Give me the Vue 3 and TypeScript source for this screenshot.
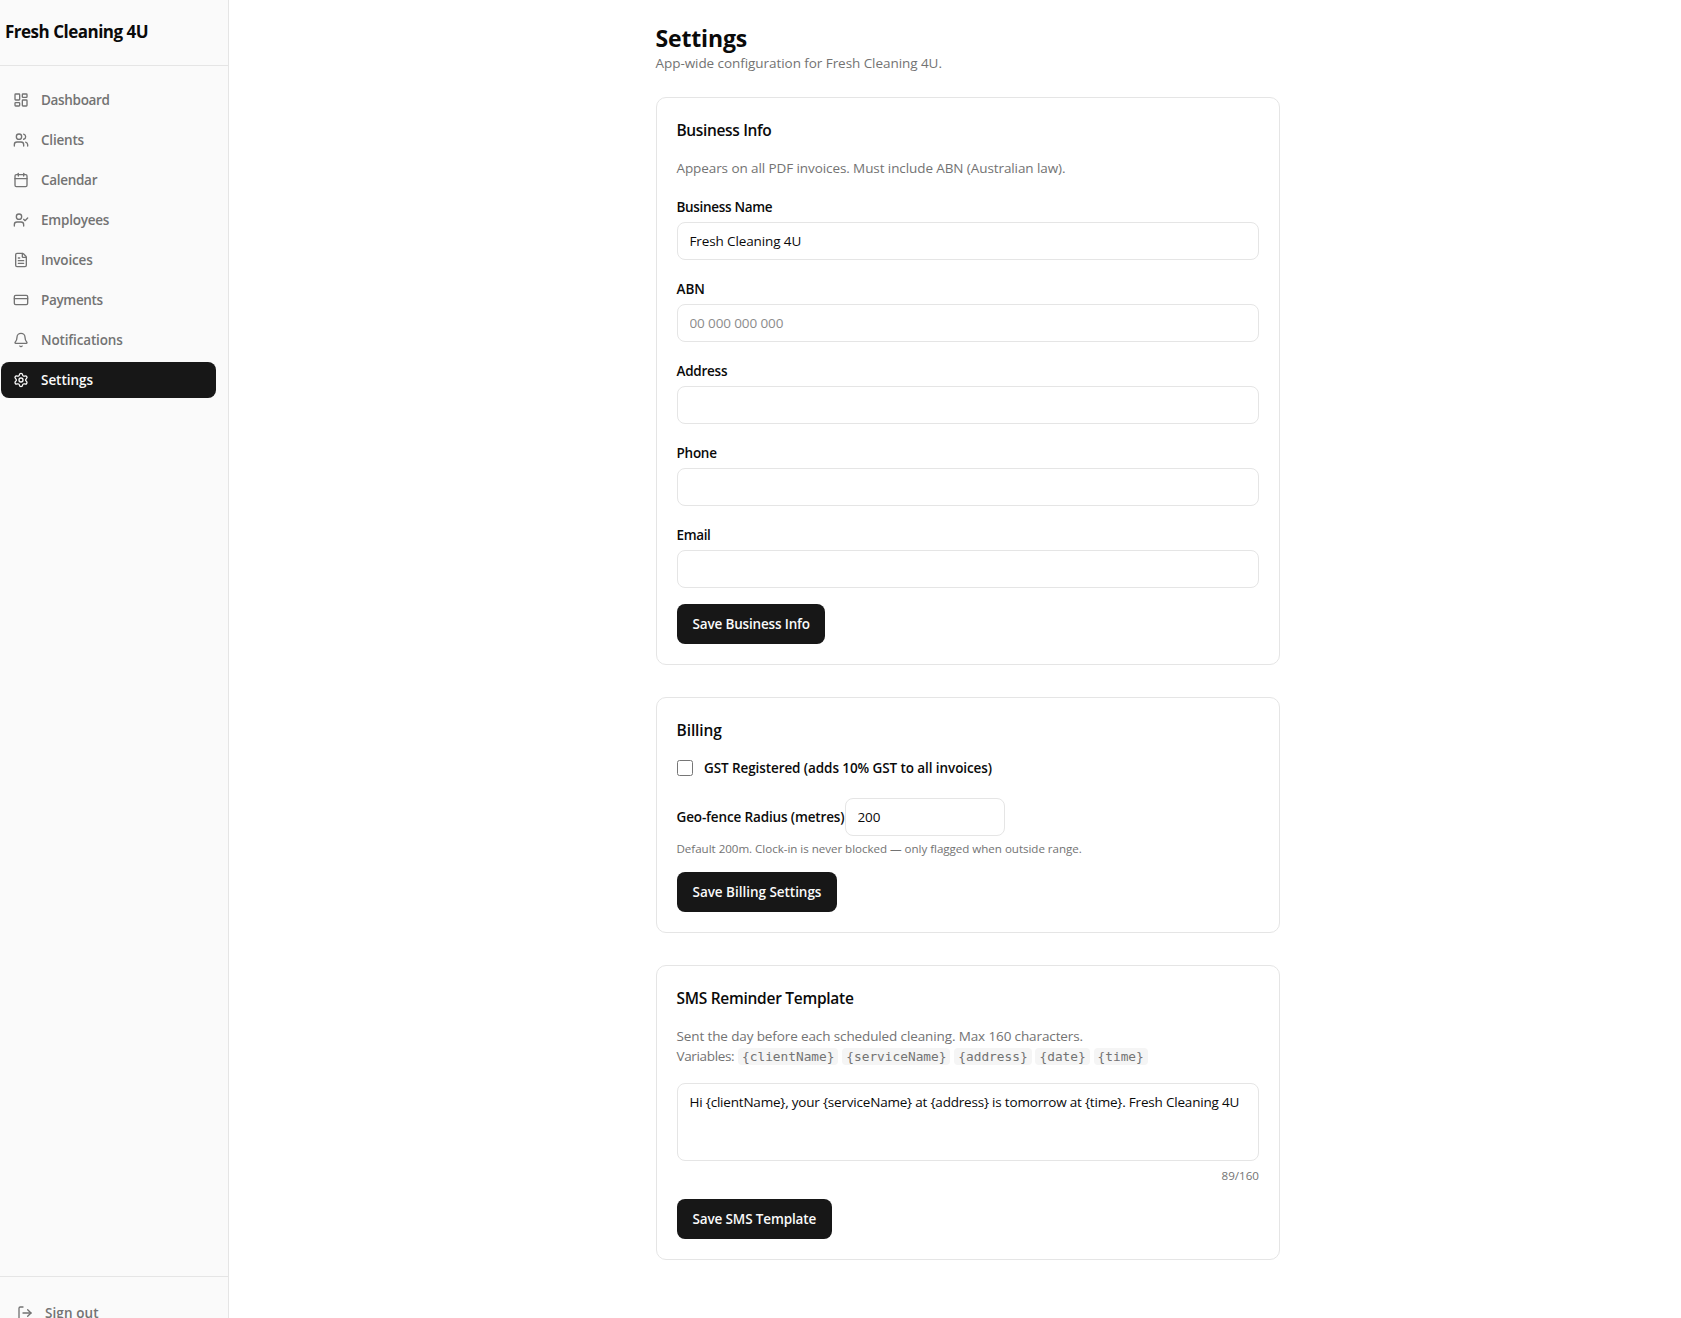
<script setup lang="ts">
import { computed, ref } from 'vue'

interface NavItem {
  label: string
  icon: string[]
  track: number
  active?: boolean
}

interface Field {
  key: string
  label: string
  value: string
  placeholder?: string
  track: number
}

const navItems: NavItem[] = [
  {
    label: 'Dashboard',
    track: -0.33,
    icon: [
      'M4 3h5a1 1 0 0 1 1 1v7a1 1 0 0 1-1 1H4a1 1 0 0 1-1-1V4a1 1 0 0 1 1-1z',
      'M15 3h5a1 1 0 0 1 1 1v3a1 1 0 0 1-1 1h-5a1 1 0 0 1-1-1V4a1 1 0 0 1 1-1z',
      'M15 12h5a1 1 0 0 1 1 1v7a1 1 0 0 1-1 1h-5a1 1 0 0 1-1-1v-7a1 1 0 0 1 1-1z',
      'M4 16h5a1 1 0 0 1 1 1v3a1 1 0 0 1-1 1H4a1 1 0 0 1-1-1v-3a1 1 0 0 1 1-1z',
    ],
  },
  {
    label: 'Clients',
    track: -0.2,
    icon: [
      'M16 21v-2a4 4 0 0 0-4-4H6a4 4 0 0 0-4 4v2',
      'M16 3.128a4 4 0 0 1 0 7.744',
      'M22 21v-2a4 4 0 0 0-3-3.87',
      'M5 7a4 4 0 1 0 8 0a4 4 0 1 0-8 0',
    ],
  },
  {
    label: 'Calendar',
    track: -0.3,
    icon: [
      'M8 2v4',
      'M16 2v4',
      'M5 4h14a2 2 0 0 1 2 2v14a2 2 0 0 1-2 2H5a2 2 0 0 1-2-2V6a2 2 0 0 1 2-2z',
      'M3 10h18',
    ],
  },
  {
    label: 'Employees',
    track: -0.22,
    icon: [
      'm16 11 2 2 4-4',
      'M16 21v-2a4 4 0 0 0-4-4H6a4 4 0 0 0-4 4v2',
      'M5 7a4 4 0 1 0 8 0a4 4 0 1 0-8 0',
    ],
  },
  {
    label: 'Invoices',
    track: -0.18,
    icon: [
      'M6 22a2 2 0 0 1-2-2V4a2 2 0 0 1 2-2h8a2.4 2.4 0 0 1 1.704.706l3.588 3.588A2.4 2.4 0 0 1 20 8v12a2 2 0 0 1-2 2z',
      'M14 2v5a1 1 0 0 0 1 1h5',
      'M10 9H8',
      'M16 13H8',
      'M16 17H8',
    ],
  },
  {
    label: 'Payments',
    track: -0.33,
    icon: ['M4 5h16a2 2 0 0 1 2 2v10a2 2 0 0 1-2 2H4a2 2 0 0 1-2-2V7a2 2 0 0 1 2-2z', 'M2 10h20'],
  },
  {
    label: 'Notifications',
    track: -0.15,
    icon: [
      'M10.268 21a2 2 0 0 0 3.464 0',
      'M3.262 15.326A1 1 0 0 0 4 17h16a1 1 0 0 0 .74-1.673C19.41 13.956 18 12.499 18 8A6 6 0 0 0 6 8c0 4.499-1.411 5.956-2.738 7.326',
    ],
  },
  {
    label: 'Settings',
    track: -0.04,
    active: true,
    icon: [
      'M9.671 4.136a2.34 2.34 0 0 1 4.659 0 2.34 2.34 0 0 0 3.319 1.915 2.34 2.34 0 0 1 2.33 4.033 2.34 2.34 0 0 0 0 3.831 2.34 2.34 0 0 1-2.33 4.033 2.34 2.34 0 0 0-3.319 1.915 2.34 2.34 0 0 1-4.659 0 2.34 2.34 0 0 0-3.32-1.915 2.34 2.34 0 0 1-2.33-4.033 2.34 2.34 0 0 0 0-3.831A2.34 2.34 0 0 1 6.35 6.051a2.34 2.34 0 0 0 3.319-1.915',
      'M9 12a3 3 0 1 0 6 0a3 3 0 1 0-6 0',
    ],
  },
]

const fields = ref<Field[]>([
  { key: 'name', label: 'Business Name', value: 'Fresh Cleaning 4U', track: -0.32 },
  { key: 'abn', label: 'ABN', value: '', placeholder: '00 000 000 000', track: -0.05 },
  { key: 'address', label: 'Address', value: '', track: -0.25 },
  { key: 'phone', label: 'Phone', value: '', track: -0.25 },
  { key: 'email', label: 'Email', value: '', track: -0.35 },
])

const gstRegistered = ref(false)
const radius = ref('200')
const variables = ['clientName', 'serviceName', 'address', 'date', 'time'].map((v) => `{${v}}`)
const template = ref('Hi {clientName}, your {serviceName} at {address} is tomorrow at {time}. Fresh Cleaning 4U')
const maxLength = 160
const counter = computed(() => `${template.value.length}/${maxLength}`)
const spacing = (track: number) => ({ letterSpacing: `${track}px` })
</script>

<template>
  <div class="app">
    <aside class="sidebar">
      <div class="brand">Fresh Cleaning 4U</div>
      <nav class="nav">
        <a v-for="item in navItems" :key="item.label" class="nav-item" :class="{ active: item.active }">
          <svg class="icon" viewBox="0 0 24 24"><path v-for="d in item.icon" :key="d" :d="d" /></svg>
          <span :style="spacing(item.track)">{{ item.label }}</span>
        </a>
      </nav>
      <div class="sidebar-footer">
        <button class="sign-out" type="button">
          <svg class="icon" viewBox="0 0 24 24">
            <path d="m16 17 5-5-5-5" />
            <path d="M21 12H9" />
            <path d="M9 21H5a2 2 0 0 1-2-2V5a2 2 0 0 1 2-2h4" />
          </svg>
          <span>Sign out</span>
        </button>
      </div>
    </aside>

    <main class="main">
      <div class="content">
        <header class="page-head">
          <h1>Settings</h1>
          <p>App-wide configuration for Fresh Cleaning 4U.</p>
        </header>

        <section class="card">
          <h2 class="h-business">Business Info</h2>
          <p class="desc">Appears on all PDF invoices. Must include ABN (Australian law).</p>
          <div v-for="f in fields" :key="f.key" class="field">
            <label :for="f.key" :style="spacing(f.track)">{{ f.label }}</label>
            <input :id="f.key" v-model="f.value" class="input" type="text" :placeholder="f.placeholder" />
          </div>
          <button class="primary save-business" type="button">Save Business Info</button>
        </section>

        <section class="card billing">
          <h2>Billing</h2>
          <div class="check-row">
            <input id="gst" v-model="gstRegistered" type="checkbox" class="checkbox" />
            <label for="gst">GST Registered (adds 10% GST to all invoices)</label>
          </div>
          <div class="radius-row">
            <label for="radius">Geo-fence Radius (metres)</label>
            <input id="radius" v-model="radius" class="input" type="text" />
          </div>
          <p class="help">Default 200m. Clock-in is never blocked — only flagged when outside range.</p>
          <button class="primary save-billing" type="button">Save Billing Settings</button>
        </section>

        <section class="card">
          <h2 class="h-sms">SMS Reminder Template</h2>
          <div class="desc sms-desc">
            <p>Sent the day before each scheduled cleaning. Max 160 characters.</p>
            <div class="variables">
              <span class="var-label">Variables:</span>
              <code v-for="v in variables" :key="v">{{ v }}</code>
            </div>
          </div>
          <textarea v-model="template" class="input textarea" spellcheck="false" :maxlength="maxLength"></textarea>
          <p class="counter">{{ counter }}</p>
          <button class="primary save-sms" type="button">Save SMS Template</button>
        </section>
      </div>
    </main>
  </div>
</template>

<style>
html,
body {
  overflow: hidden;
  background: #fff;
}
</style>

<style scoped>
.app,
.app * {
  box-sizing: border-box;
}

.app {
  display: flex;
  height: 1318px;
  overflow: hidden;
  color: #0a0a0a;
  font-family: 'Open Sans', 'Noto Sans', sans-serif;
  font-size: 13.5px;
  line-height: 20px;
}

h1,
h2,
p {
  margin: 0;
}

button,
input,
textarea {
  font-family: inherit;
  font-size: inherit;
  line-height: inherit;
}

.sidebar {
  display: flex;
  flex-direction: column;
  flex: none;
  width: 229px;
  height: 1350px;
  border-right: 1px solid #e5e5e5;
  background: #fafafa;
}

.brand {
  flex: none;
  height: 66px;
  padding: 18px 5px 0;
  border-bottom: 1px solid #e5e5e5;
  font-size: 17px;
  font-weight: 700;
  line-height: 28px;
  letter-spacing: -0.5px;
}

.nav {
  display: flex;
  flex: 1;
  flex-direction: column;
  gap: 4px;
  padding: 16px 12px 0 1px;
}

.nav-item {
  display: flex;
  align-items: center;
  gap: 12px;
  height: 36px;
  padding: 0 12px;
  border-radius: 8px;
  color: #737373;
  font-weight: 600;
}

.nav-item.active {
  background: #171717;
  color: #fafafa;
}

.icon {
  flex: none;
  width: 16px;
  height: 16px;
  fill: none;
  stroke: currentColor;
  stroke-width: 2;
  stroke-linecap: round;
  stroke-linejoin: round;
}

.sidebar-footer {
  flex: none;
  height: 74px;
  padding: 16px 12px 16px 1px;
  border-top: 1px solid #e5e5e5;
}

.sign-out {
  display: flex;
  align-items: center;
  gap: 12px;
  width: 100%;
  height: 40px;
  padding: 0 16px;
  border: 0;
  background: none;
  color: #737373;
  font-weight: 600;
  letter-spacing: 0.08px;
}

.main {
  flex: 1;
  padding: 24px 0 0 26px;
}

.content {
  display: flex;
  flex-direction: column;
  gap: 32px;
  width: 624px;
  margin: 0 auto;
  text-indent: -0.5px;
}

.page-head {
  height: 49px;
  margin-bottom: -8px;
}

.page-head h1 {
  font-size: 23px;
  font-weight: 700;
  line-height: 29px;
  letter-spacing: -0.15px;
}

.page-head p {
  color: #737373;
  letter-spacing: -0.06px;
}

.card {
  display: flex;
  flex-direction: column;
  align-items: flex-start;
  gap: 16px;
  padding: 20px;
  border: 1px solid #e5e5e5;
  border-radius: 10px;
}

.card h2 {
  font-size: 15.5px;
  font-weight: 600;
  line-height: 24px;
  letter-spacing: -0.08px;
}

.card h2.h-business {
  letter-spacing: -0.35px;
}

.card h2.h-sms {
  letter-spacing: -0.28px;
}

.desc {
  color: #737373;
  letter-spacing: -0.09px;
}

.field {
  display: flex;
  flex-direction: column;
  gap: 5px;
  width: 100%;
  padding-top: 3px;
}

label {
  font-weight: 600;
}

.input {
  width: 100%;
  height: 38px;
  padding: 0 12px;
  border: 1px solid #e5e5e5;
  border-radius: 8px;
  outline: none;
  background: #fff;
  color: #0a0a0a;
  letter-spacing: -0.12px;
  text-indent: -0.5px;
}

.input::placeholder {
  color: #8c8c8c;
  opacity: 1;
}

.primary {
  height: 40px;
  padding: 0 0 0 15.5px;
  border: 0;
  border-radius: 8px;
  background: #171717;
  color: #fafafa;
  font-weight: 600;
  text-align: left;
  white-space: nowrap;
}

.save-business {
  width: 148px;
  letter-spacing: -0.17px;
}

.save-billing {
  width: 160px;
  letter-spacing: -0.03px;
}

.save-sms {
  width: 155px;
  letter-spacing: -0.14px;
}

.check-row {
  display: flex;
  align-items: center;
  gap: 11.5px;
  letter-spacing: -0.09px;
}

.checkbox {
  width: 16px;
  height: 16px;
  margin: 0;
}

.radius-row {
  display: flex;
  align-items: center;
  margin-top: 4px;
}

.radius-row label {
  width: 168px;
  letter-spacing: -0.14px;
  white-space: nowrap;
}

.radius-row .input {
  width: 160px;
}

.help {
  position: relative;
  top: 1px;
  margin-top: -12px;
  color: #737373;
  font-size: 11.6px;
  line-height: 16px;
  letter-spacing: -0.04px;
}

.sms-desc p {
  letter-spacing: -0.12px;
}

.variables {
  display: flex;
  align-items: center;
  gap: 3.84px;
  height: 20px;
}

.var-label {
  width: 57.2px;
  letter-spacing: -0.35px;
}

.variables code {
  height: 17px;
  padding: 0 4px;
  border-radius: 4px;
  background: #f5f5f5;
  font-family: 'DejaVu Sans Mono', monospace;
  font-size: 12.8px;
  line-height: 17px;
  letter-spacing: 0;
  text-indent: 0;
}

.textarea {
  height: 78px;
  margin-top: 1px;
  padding: 8px 12px;
  resize: none;
  letter-spacing: -0.2px;
}

.counter {
  align-self: flex-end;
  margin: -9px 0 -1px;
  color: #737373;
  font-size: 11.6px;
  line-height: 16px;
}
</style>
